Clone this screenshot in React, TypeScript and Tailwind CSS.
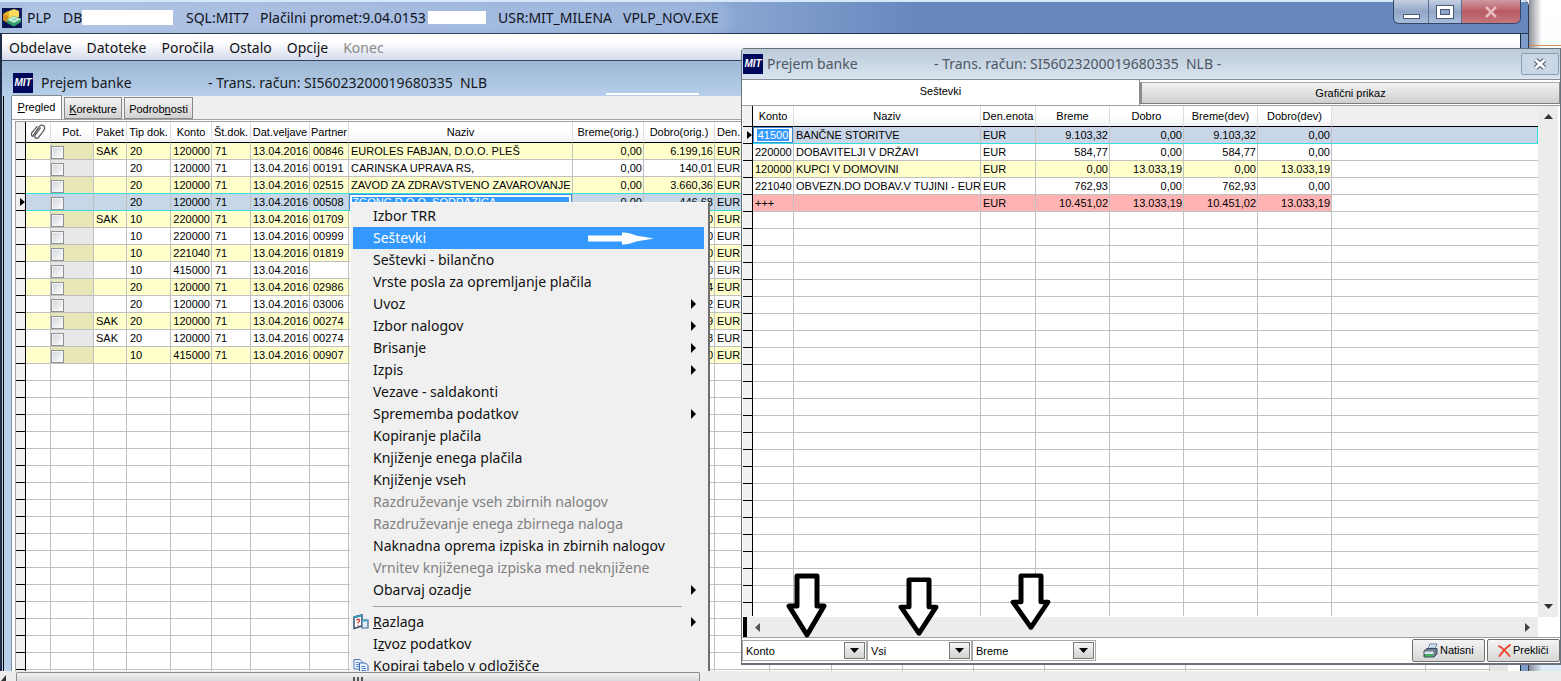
import React from "react";

type PaymentRow = {
  paket?: string;
  tip: string;
  konto: string;
  partner: string;
  naziv?: string;
  breme?: string;
  dobro?: string;
};

const payments: PaymentRow[] = [
  { paket: "SAK", tip: "20", konto: "120000", partner: "00846", naziv: "EUROLES FABJAN, D.O.O. PLEŠ", breme: "0,00", dobro: "6.199,16" },
  { tip: "20", konto: "120000", partner: "00191", naziv: "CARINSKA UPRAVA RS,", breme: "0,00", dobro: "140,01" },
  { tip: "20", konto: "120000", partner: "02515", naziv: "ZAVOD ZA ZDRAVSTVENO ZAVAROVANJE", breme: "0,00", dobro: "3.660,36" },
  { tip: "20", konto: "120000", partner: "00508", naziv: "ZGONC D.O.O. SODRAŽICA", breme: "0,00", dobro: "446,68" },
  { paket: "SAK", tip: "10", konto: "220000", partner: "01709", dobro: "0" },
  { tip: "10", konto: "220000", partner: "00999", dobro: "0" },
  { tip: "10", konto: "221040", partner: "01819", dobro: "0" },
  { tip: "10", konto: "415000", partner: "", dobro: "0" },
  { tip: "20", konto: "120000", partner: "02986", dobro: "4" },
  { tip: "20", konto: "120000", partner: "03006", dobro: "2" },
  { paket: "SAK", tip: "20", konto: "120000", partner: "00274", dobro: "9" },
  { paket: "SAK", tip: "20", konto: "120000", partner: "00274", dobro: "8" },
  { tip: "10", konto: "415000", partner: "00907", dobro: "0" },
];

const totals = [
  ["41500", "BANČNE STORITVE", "EUR", "9.103,32", "0,00", "9.103,32", "0,00"],
  ["220000", "DOBAVITELJI V DRŽAVI", "EUR", "584,77", "0,00", "584,77", "0,00"],
  ["120000", "KUPCI V DOMOVINI", "EUR", "0,00", "13.033,19", "0,00", "13.033,19"],
  ["221040", "OBVEZN.DO DOBAV.V TUJINI - EUR", "EUR", "762,93", "0,00", "762,93", "0,00"],
  ["+++", "", "EUR", "10.451,02", "13.033,19", "10.451,02", "13.033,19"],
];

type MenuEntry = { label: React.ReactNode; sub?: boolean; disabled?: boolean; active?: boolean; icon?: React.ReactNode };

const HelpIcon = () => (
  <svg width="16" height="16" viewBox="0 0 16 16" aria-hidden="true">
    <path d="M1 3 L9 1 V12 L1 14.500Z" fill="#fff" stroke="#26486c" strokeWidth="1.400" />
    <path d="M1 3.500 L9 1.500" stroke="#3b9bc0" strokeWidth="2.200" />
    <path d="M3.500 6.500 Q5 4 6.500 6 Q6.800 7.500 5.200 8.500 V9.500 M5.200 11 V12" fill="none" stroke="#d63a3a" strokeWidth="1.400" />
    <path d="M9 6 H15 V14 H9Z" fill="#dcecf8" stroke="#44688e" strokeWidth="1.200" />
    <path d="M9 6.500 H15" stroke="#4aa4c8" strokeWidth="2" />
  </svg>
);

const CopyIcon = () => (
  <svg width="16" height="16" viewBox="0 0 16 16" aria-hidden="true">
    <path d="M1 1.500 H7 L9 3.500 V11 H1Z" fill="#eaf2fd" stroke="#4f79b8" />
    <path d="M3 4.500 H6 M3 6.500 H6 M3 8.500 H6" stroke="#5f8ccc" />
    <path d="M6.500 5 H12.500 L15 7.500 V14.500 H6.500Z" fill="#eaf2fd" stroke="#3965a8" />
    <path d="M8.500 8.500 H12 M8.500 10.500 H13 M8.500 12.500 H13" stroke="#4d7fc8" />
  </svg>
);

const menuTop: MenuEntry[] = [
  { label: "Izbor TRR" },
  { label: "Seštevki", active: true },
  { label: "Seštevki - bilančno" },
  { label: "Vrste posla za opremljanje plačila" },
  { label: "Uvoz", sub: true },
  { label: "Izbor nalogov", sub: true },
  { label: "Brisanje", sub: true },
  { label: "Izpis", sub: true },
  { label: "Vezave - saldakonti" },
  { label: "Sprememba podatkov", sub: true },
  { label: "Kopiranje plačila" },
  { label: "Knjiženje enega plačila" },
  { label: "Knjiženje vseh" },
  { label: "Razdruževanje vseh zbirnih nalogov", disabled: true },
  { label: "Razdruževanje enega zbirnega naloga", disabled: true },
  { label: "Naknadna oprema izpiska in zbirnih nalogov" },
  { label: "Vrnitev knjiženega izpiska med neknjižene", disabled: true },
  { label: "Obarvaj ozadje", sub: true },
];

const menuBottom: MenuEntry[] = [
  { label: <><u>R</u>azlaga</>, sub: true, icon: <HelpIcon /> },
  { label: <>I<u>z</u>voz podatkov</> },
  { label: "Kopiraj tabelo v odložišče", icon: <CopyIcon /> },
];

const cell = "h-[17px] overflow-hidden whitespace-nowrap border-b border-r border-[#c0c0c0] px-[3px] py-0 text-left leading-4";
const num = "h-[17px] overflow-hidden whitespace-nowrap border-b border-r border-[#c0c0c0] px-px py-0 text-right leading-4";
const head = "h-[21px] overflow-hidden whitespace-nowrap border-b border-r border-b-black border-r-[#dedede] bg-linear-to-b from-white from-50% to-[#f1f2f4] px-0 py-0 text-center font-normal leading-5";
const indicator = "h-[17px] border-b border-r border-black bg-[#f0f0f0] p-0";

function MitLogo() {
  return (
    <span className="flex h-5 w-5 shrink-0 items-center justify-center overflow-hidden bg-[#00085c] font-['Liberation_Sans',sans-serif] text-[10px] font-bold italic leading-none text-white">
      MIT
    </span>
  );
}

function RowMarker() {
  return (
    <svg className="ml-auto block" width="5" height="8" viewBox="0 0 5 8" aria-hidden="true">
      <path d="M0 0 L5 4 L0 8Z" fill="#000" />
    </svg>
  );
}

function PaymentsTable() {
  const widths = [10, 25, 43, 33, 44, 41, 39, 59, 39, 224, 71, 71, 55, 62, 71, 71, 71, 141, 240];
  return (
    <table className="w-full table-fixed border-separate border-spacing-0 bg-white">
      <colgroup>
        {widths.map((w, i) => <col key={i} style={{ width: w }} />)}
        <col />
      </colgroup>
      <thead>
        <tr>
          <th className="h-[21px] border-b border-r border-black bg-[#f0f0f0] p-0" />
          <th className={head}>
            <svg className="mx-auto block -rotate-6" width="18" height="16" viewBox="0 0 18 16" fill="none" stroke="#555" strokeWidth="1.200" aria-label="Priponka">
              <path d="M3 12 L11 2.500 Q13.500 0.500 15.500 2.500 Q17 4.500 15 7 L9 13.500 Q7 15 5.500 13.500 Q4.500 12 6 10.500 L12 4 M3 12 Q1 9 4 7 L9 2" />
            </svg>
          </th>
          <th className={head}>Pot.</th>
          <th className={head}>Paket</th>
          <th className={head}>Tip dok.</th>
          <th className={head}>Konto</th>
          <th className={head}>Št.dok.</th>
          <th className={head}>Dat.veljave</th>
          <th className={head}>Partner</th>
          <th className={head}>Naziv</th>
          <th className={head}>Breme(orig.)</th>
          <th className={head}>Dobro(orig.)</th>
          <th className={head}><span className="block pl-0.5 text-left">Den.</span></th>
          {Array.from({ length: 7 }, (_, i) => <th key={i} className={head} />)}
        </tr>
      </thead>
      <tbody>
        {payments.map((r, i) => {
          const selected = i === 3;
          const odd = i % 2 === 0;
          const tone = selected ? "bg-[#c6d7e8]" : odd ? "bg-[#ffffcc]" : "bg-white";
          const pot = selected ? "" : odd ? "bg-[#e6e6b6]" : "bg-[#e8e8e8]";
          const line = selected || i === 2 ? "border-b-[#38dede]!" : "";
          return (
            <tr key={i} className={tone}>
              <td className={indicator}>{selected && <RowMarker />}</td>
              <td className={`${cell} ${line}`} />
              <td className={`${cell} ${pot} ${line} pl-0!`}>
                <input type="checkbox" aria-label={`Pot. ${i + 1}`} className="mt-0.5 block h-[13px] w-[13px] appearance-none border border-[#8f9396] bg-linear-to-br from-[#cfd3d8] to-white shadow-[inset_0_0_0_1px_#f4f4f4]" />
              </td>
              <td className={`${cell} ${line} px-0.5!`}>{r.paket}</td>
              <td className={`${cell} ${line}`}>{r.tip}</td>
              <td className={`${num} ${line}`}>{r.konto}</td>
              <td className={`${cell} ${line}`}>71</td>
              <td className={`${cell} ${line} px-0.5!`}>13.04.2016</td>
              <td className={`${cell} ${line}`}>{r.partner}</td>
              <td className={`${cell} ${line} ${selected ? "p-0!" : "px-0.5!"}`}>
                {selected ? (
                  <span className="block border border-[#3a8ee0] bg-white p-0.5">
                    <span className="block bg-[#3399ff] leading-[10px] text-white">{r.naziv}</span>
                  </span>
                ) : r.naziv}
              </td>
              <td className={`${num} ${line}`}>{r.breme}</td>
              <td className={`${num} ${line}`}>{r.dobro}</td>
              <td className={`${cell} ${line} px-0.5!`}>EUR</td>
              {Array.from({ length: 7 }, (_, k) => <td key={k} className={`${cell} ${line}`} />)}
            </tr>
          );
        })}
        {Array.from({ length: 19 }, (_, i) => (
          <tr key={i}>
            <td className={indicator} />
            {Array.from({ length: 19 }, (_, k) => <td key={k} className={cell} />)}
          </tr>
        ))}
      </tbody>
    </table>
  );
}

function TotalsTable() {
  const widths = [10, 41, 187, 55, 74, 74, 74, 74];
  return (
    <table className="w-full table-fixed border-separate border-spacing-0 bg-white">
      <colgroup>
        {widths.map((w, i) => <col key={i} style={{ width: w }} />)}
        <col />
      </colgroup>
      <thead>
        <tr>
          <th className="h-[21px] border-b border-r border-black bg-[#f0f0f0] p-0" />
          {["Konto", "Naziv", "Den.enota", "Breme", "Dobro", "Breme(dev)", "Dobro(dev)"].map((h) => (
            <th key={h} className={head}>{h}</th>
          ))}
          <th className="h-[21px] border-b border-black bg-[#efefef] p-0" />
        </tr>
      </thead>
      <tbody>
        {totals.map((r, i) => {
          const tone = ["bg-[#c8d6e8]", "bg-white", "bg-[#ffffcc]", "bg-white", "bg-[#ffb3b3]"][i];
          const line = i === 0 ? "border-b-[#38dede]!" : "";
          return (
            <tr key={i}>
              <td className={indicator}>{i === 0 && <RowMarker />}</td>
              {r.map((v, k) => (
                <td key={k} className={`${k > 2 ? num : cell} ${tone} ${line} ${k === 0 && i === 0 ? "p-0!" : k < 3 ? "px-0.5!" : ""}`}>
                  {k === 0 && i === 0 ? (
                    <span className="block border border-[#3a8ee0] bg-white px-[3px] py-px">
                      <span className="block bg-[#3399ff] text-center leading-3 text-white">{v}</span>
                    </span>
                  ) : v}
                </td>
              ))}
              <td className={`${cell} ${line} ${i === 0 ? `${tone} border-r-[#38dede]!` : "border-r-0!"}`} />
            </tr>
          );
        })}
        {Array.from({ length: 24 }, (_, i) => (
          <tr key={i}>
            <td className={indicator} />
            {Array.from({ length: 7 }, (_, k) => <td key={k} className={cell} />)}
            <td className={`${cell} border-r-0!`} />
          </tr>
        ))}
      </tbody>
    </table>
  );
}

function MenuItem({ item }: { item: MenuEntry }) {
  const color = item.disabled ? "text-[#808080]" : item.active ? "bg-[#3399ff] text-white" : "text-[#111]";
  return (
    <li>
      <button type="button" role="menuitem" disabled={item.disabled} className={`flex h-[22px] w-full items-center whitespace-nowrap pr-2 text-left leading-[22px] ${color}`}>
        <span className="flex w-5 shrink-0">{item.icon}</span>
        <span className="flex-1">{item.label}</span>
        {item.active && (
          <svg className="mr-[42px]" width="66" height="14" viewBox="0 0 66 14" aria-hidden="true">
            <path d="M0 4.500 H34 V1.500 Q40 1 48 4.500 L66 7.500 L48 10.500 Q40 14 34 13.500 V10.500 H0Z" fill="#fff" />
          </svg>
        )}
        {item.sub && (
          <svg width="5" height="10" viewBox="0 0 5 10" aria-hidden="true">
            <path d="M0 0 L5 5 L0 10Z" fill="#000" />
          </svg>
        )}
      </button>
    </li>
  );
}

function ContextMenu() {
  return (
    <ul role="menu" className="absolute left-[350px] top-[202px] w-[360px] border border-[#f8f8f8] border-r-2 border-r-[#6e6e6e] bg-[#f0f0f0] py-0.5 pl-0.5 pr-1 text-sm">
      {menuTop.map((m, i) => <MenuItem key={i} item={m} />)}
      <li role="separator" className="ml-5 mr-[22px] flex h-2.5 items-center"><span className="h-px w-full bg-[#a0a0a0]" /></li>
      {menuBottom.map((m, i) => <MenuItem key={i} item={m} />)}
    </ul>
  );
}

function Combo({ label, value, width }: { label: string; value: string; width: string }) {
  return (
    <span className={`relative block h-[21px] border border-[#a9a9a9] bg-white ${width}`}>
      <select aria-label={label} defaultValue={value} className="h-full w-full appearance-none bg-transparent px-[3px] text-[11px] leading-4 outline-none">
        <option>{value}</option>
      </select>
      <span className="pointer-events-none absolute right-px top-px flex h-[17px] w-[21px] items-center justify-center border border-[#7a7a7a] bg-linear-to-b from-[#f6f6f6] to-[#d2d2d2]">
        <svg width="9" height="5" viewBox="0 0 9 5" aria-hidden="true"><path d="M0 0 H9 L4.500 5Z" fill="#000" /></svg>
      </span>
    </span>
  );
}

function DownArrow({ place }: { place: string }) {
  return (
    <svg className={`pointer-events-none absolute w-[42px] ${place}`} viewBox="0 0 42 66" preserveAspectRatio="none" aria-hidden="true">
      <path d="M11 3 H31 V33 H38 L21 62 L3 33 H11Z" fill="#fff" stroke="#000" strokeWidth="5" strokeLinejoin="round" />
    </svg>
  );
}

function TotalsWindow() {
  return (
    <section className="absolute bottom-4 left-[741px] right-0 top-12 flex flex-col rounded-tl border border-b-2 border-[#68727c] bg-white">
      <header className="flex h-[30px] shrink-0 items-center bg-linear-to-b from-[#bccad8] to-[#d8e4f0] pl-px text-sm text-[#4e5863]">
        <MitLogo />
        <span className="ml-1 w-[167px]">Prejem banke</span>
        <span className="flex-1 whitespace-pre">- Trans. račun: SI56023200019680335  NLB -</span>
        <button type="button" aria-label="Zapri" className="mr-px flex h-[22px] w-[38px] items-center justify-center rounded-xs border border-[#8b9bb0] bg-[#c8d6e5]">
          <svg width="14" height="12" viewBox="0 0 14 12" aria-hidden="true">
            <path d="M2.500 2 L11.500 10 M11.500 2 L2.500 10" stroke="#4a5568" strokeWidth="5" />
            <path d="M2.500 2 L11.500 10 M11.500 2 L2.500 10" stroke="#fff" strokeWidth="3" />
          </svg>
        </button>
      </header>
      <div role="tablist" className="flex h-[26px] shrink-0 items-start border-t border-[#8a8e94]">
        <button role="tab" type="button" aria-selected="true" className="h-[25px] w-[398px] border-r border-[#8a8e94] pb-0.5">Seštevki</button>
        <button role="tab" type="button" aria-selected="false" className="mt-0.5 h-[22px] flex-1 border-2 border-t border-r border-[#8a8a8a] border-t-[#a8a8a8] border-b-[#7c7c7c] border-b bg-linear-to-b from-[#f2f2f2] to-[#cfcfcf]">Grafični prikaz</button>
      </div>
      <div className="flex min-h-0 flex-1 border-t border-[#a0a0a0] pl-px">
        <div className="flex min-w-0 flex-1 flex-col">
          <div className="min-h-0 flex-1 overflow-hidden"><TotalsTable /></div>
          <div className="flex h-[21px] shrink-0 items-center border-t border-white bg-[#ececec]">
            <span className="h-full w-1 bg-black" />
            <svg className="ml-2" width="5" height="9" viewBox="0 0 5 9" aria-hidden="true"><path d="M5 0 V9 L0 4.500Z" fill="#555" /></svg>
            <span className="flex-1" />
            <svg className="mr-2" width="5" height="9" viewBox="0 0 5 9" aria-hidden="true"><path d="M0 0 V9 L5 4.500Z" fill="#444" /></svg>
          </div>
        </div>
        <div className="flex w-[22px] shrink-0 flex-col bg-white">
          <div className="flex flex-1 flex-col items-center justify-between border-r-2 border-white bg-[#ececec] py-2">
            <svg width="9" height="5" viewBox="0 0 9 5" aria-hidden="true"><path d="M0 5 H9 L4.500 0Z" fill="#333" /></svg>
            <svg width="9" height="5" viewBox="0 0 9 5" aria-hidden="true"><path d="M0 0 H9 L4.500 5Z" fill="#333" /></svg>
          </div>
          <div className="h-5" />
        </div>
      </div>
      <footer className="flex h-[26px] shrink-0 items-center border-t border-[#a0a0a0]">
        <Combo label="Polje" value="Konto" width="w-[125px]" />
        <Combo label="Obseg" value="Vsi" width="w-[105px]" />
        <Combo label="Vrednost" value="Breme" width="w-[124px]" />
        <span className="flex-1" />
        <button type="button" className="mr-0.5 flex h-[23px] w-[73px] items-center gap-0.5 rounded-xs border border-[#6f6f6f] bg-linear-to-b from-[#f4f4f4] to-[#d6d6d6] pl-2.5">
          <svg width="15" height="15" viewBox="0 0 15 15" aria-hidden="true">
            <path d="M5 6 L7 1 H14 L11.500 6Z" fill="#fff" stroke="#5c7da4" />
            <path d="M7.500 3 H12 M7 4.500 H11" stroke="#8fb1d6" strokeWidth="0.800" />
            <path d="M1 8 L4 5.500 H14 V11 L11 14 H1Z" fill="#6d7f93" stroke="#3a4a5c" />
            <path d="M1.500 8.500 H10.500 V11 H1.500Z" fill="#dbe5ee" />
            <path d="M2 12.500 H10" stroke="#35c24a" strokeWidth="1.800" />
          </svg>
          Natisni
        </button>
        <button type="button" className="flex h-[23px] w-[73px] items-center gap-0.5 rounded-xs border border-[#6f6f6f] bg-linear-to-b from-[#f4f4f4] to-[#d6d6d6] pl-2.5">
          <svg width="13" height="13" viewBox="0 0 13 13" aria-hidden="true">
            <path d="M1 2 Q6 5 11.500 12 M12 1 Q6 5 1.500 12" fill="none" stroke="#f04a30" strokeWidth="2" strokeLinecap="round" />
          </svg>
          Prekliči
        </button>
      </footer>
    </section>
  );
}

function MainWindow() {
  return (
    <section className="flex min-h-0 flex-1 bg-linear-to-b from-white to-[#dfeaf8]">
      <div className="flex min-w-0 flex-1 flex-col overflow-hidden rounded-tr-md border-r border-[#2b3b58] bg-[#7d9cc9]">
        <header className="flex h-[34px] shrink-0 items-center border-b border-t-2 border-b-[#26364e] border-t-[#d5e8f8] bg-linear-to-r from-[#a9bfe2] via-[#92add8] via-45% to-[#6688bd] to-60% pl-0.5 text-sm text-[#10141c]">
          <svg width="20" height="20" viewBox="0 0 20 20" aria-hidden="true">
            <rect width="20" height="20" fill="#0a1450" />
            <path d="M1 6 L6 3 L11 5 V13 L6 15 L1 12Z" fill="#eeb428" />
            <path d="M7 3 L12 1 L17 3 V9 L11 11 L7 9Z" fill="#fbd95a" />
            <path d="M1 6 L6 8 V15 L1 12Z" fill="#d18f1c" />
            <path d="M5 12 V15 L12 18.500 L19 14 V11 L12 15Z" fill="#2f9e6a" />
            <path d="M5 11.500 L12 8.500 L19 11 L12 15Z" fill="#d4f5e4" stroke="#6cc79a" strokeWidth="0.800" />
            <path d="M9 11.800 L13 10.200 L15.500 11.200 L12 13Z" fill="#7fd4a4" />
          </svg>
          <div className="ml-1 flex h-5 items-center whitespace-nowrap rounded-full bg-white/10 pl-px pr-2 shadow-[0_0_10px_5px_rgba(255,255,255,0.12)]">
            <span className="w-[36px]">PLP</span>
            <span className="w-[19px]">DB</span>
            <span className="h-[15px] w-[91px] bg-white" />
            <span className="ml-[13px] w-[74px]">SQL:MIT7</span>
            <span className="w-[168px]">Plačilni promet:9.04.0153</span>
            <span className="h-[13px] w-[58px] bg-white" />
            <span className="ml-3 w-[125px]">USR:MIT_MILENA</span>
            <span>VPLP_NOV.EXE</span>
          </div>
          <div className="ml-auto mr-[7px] flex h-6 -translate-y-0.5 self-start overflow-hidden rounded-b-md border border-t-0 border-[#344668]">
            <button type="button" aria-label="Pomanjšaj" className="flex w-[35px] items-end justify-center border-r border-[#5d6f8e] bg-linear-to-b from-[#c5d0e2] via-[#92a7c8] to-[#a9bddb] pb-1">
              <span className="h-[5px] w-[17px] border border-[#4a5a78] bg-white" />
            </button>
            <button type="button" aria-label="Povečaj" className="flex w-[33px] items-center justify-center border-r border-[#5d6f8e] bg-linear-to-b from-[#c5d0e2] via-[#92a7c8] to-[#a9bddb]">
              <svg width="18" height="14" viewBox="0 0 18 14" aria-hidden="true">
                <rect x="0.500" y="0.500" width="17" height="13" fill="#fff" stroke="#4a5a78" />
                <rect x="4.500" y="4.500" width="9" height="5" fill="#90a6c8" stroke="#4a5a78" />
              </svg>
            </button>
            <button type="button" aria-label="Zapri" className="flex w-[58px] items-center justify-center bg-linear-to-b from-[#cf9aa2] via-[#b85a62] to-[#c4777c]">
              <svg width="12" height="12" viewBox="0 0 12 12" aria-hidden="true"><path d="M1 1 L11 11 M11 1 L1 11" stroke="#e9bcc2" strokeWidth="2.500" /></svg>
            </button>
          </div>
        </header>
        <div className="mr-[7px] flex min-h-0 flex-1 flex-col border-l-2 border-r border-[#1c2c44] bg-white">
          <nav className="flex h-[27px] shrink-0 items-center gap-[15px] border-b border-[#39455a] bg-linear-to-b from-white from-30% to-[#d5dbec] pl-[7px] pt-px text-sm text-[#111]">
            {["Obdelave", "Datoteke", "Poročila", "Ostalo", "Opcije"].map((m) => (
              <button key={m} type="button">{m}</button>
            ))}
            <button type="button" disabled className="text-[#8a8a8a]">Konec</button>
          </nav>
          <div className="flex min-h-0 flex-1 flex-col bg-[#b9d1ea]">
            <header className="flex h-[35px] shrink-0 items-center bg-linear-to-b from-[#9cb8d4] to-[#b7cfeb] pl-[11px] pt-2 text-sm text-[#151a22]">
              <MitLogo />
              <span className="ml-2 w-[167px]">Prejem banke</span>
              <span className="w-[398px] whitespace-pre">- Trans. račun: SI56023200019680335  NLB</span>
              <span className="mb-px h-0.5 w-[93px] self-end bg-white" />
            </header>
            <div className="ml-px flex min-h-0 flex-1 flex-col border-l border-black pl-[7px]">
              <div className="flex min-h-0 flex-1 flex-col border-l border-[#7d8ea8] bg-white">
                <div role="tablist" className="flex h-6 shrink-0 items-end gap-0.5 border-b border-[#a0a0a0] bg-[#efefef]">
                  <button role="tab" type="button" aria-selected="true" className="h-6 w-[50px] border-r border-t border-[#8a8a8a] bg-white"><u>P</u>regled</button>
                  <button role="tab" type="button" aria-selected="false" className="h-[22px] w-[58px] border border-[#8a8a8a] bg-linear-to-b from-[#f4f4f4] to-[#d2d2d2] pt-0.5"><u>K</u>orekture</button>
                  <button role="tab" type="button" aria-selected="false" className="h-[22px] w-[69px] border border-[#8a8a8a] bg-linear-to-b from-[#f4f4f4] to-[#d2d2d2] pt-0.5">Podrob<u>n</u>osti</button>
                </div>
                <div className="ml-[3px] mt-px mr-3 flex min-h-0 flex-1 border-l border-t border-[#a0a0a0]">
                  <div className="min-w-0 flex-1 overflow-hidden"><PaymentsTable /></div>
                  <div className="w-[18px] bg-[#e4e4e4]" />
                </div>
              </div>
            </div>
          </div>
        </div>
      </div>
      <div className="w-8 shrink-0 bg-linear-to-r from-[#5d6470]/70 to-transparent to-40%">
        <div className="h-[46px] border-b border-[#d98a50]" />
      </div>
    </section>
  );
}

export default function App() {
  return (
    <main className="relative flex h-screen flex-col overflow-hidden bg-white font-['Noto_Sans',sans-serif] text-black">
      <div className="relative flex min-h-0 flex-1 overflow-hidden text-[11px] [&_button[role=tab]]:font-['Liberation_Sans',sans-serif] [&_table]:font-['Liberation_Sans',sans-serif]">
        <MainWindow />
        <ContextMenu />
      </div>
      <div className="flex h-2.5 shrink-0 bg-[#ededed]">
        <svg className="mt-1" width="16" height="6" viewBox="0 0 16 6" aria-hidden="true"><path d="M6 0 V6 H1Z" fill="#333" /></svg>
        <div className="mt-px flex w-[684px] justify-center rounded-t-xs border border-b-0 border-[#8c8c8c] bg-linear-to-b from-[#f2f2f2] to-[#dadade] pt-1">
          <span className="flex gap-0.5"><i className="w-0.5 bg-[#555]" /><i className="w-0.5 bg-[#555]" /><i className="w-0.5 bg-[#555]" /></span>
        </div>
      </div>
      <div className="contents text-[11px] [&_button]:font-['Liberation_Sans',sans-serif] [&_select]:font-['Liberation_Sans',sans-serif] [&_table]:font-['Liberation_Sans',sans-serif]">
        <TotalsWindow />
      </div>
      <DownArrow place="left-[786px] top-[573px] h-[66px]" />
      <DownArrow place="left-[898px] top-[577px] h-[60px]" />
      <DownArrow place="left-[1010px] top-[573px] h-[58px]" />
    </main>
  );
}
